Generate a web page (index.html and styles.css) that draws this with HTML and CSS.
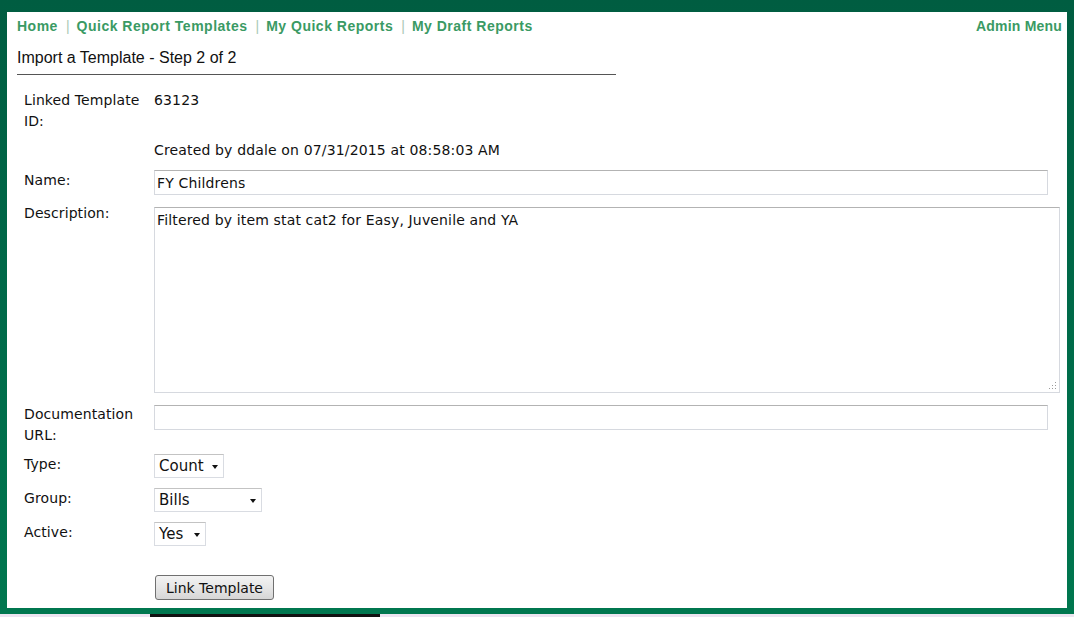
FILE: index.html
```html
<!DOCTYPE html>
<html>
<head>
<meta charset="utf-8">
<link rel="stylesheet" href="styles.css">
</head>
<body>
<div class="frame">
  <div class="page">
    <div class="nav">
      <div class="nav-left">
        <a class="link">Home</a><span class="sep">|</span>
        <a class="link">Quick Report Templates</a><span class="sep">|</span>
        <a class="link">My Quick Reports</a><span class="sep">|</span>
        <a class="link">My Draft Reports</a>
      </div>
      <a class="link admin">Admin Menu</a>
    </div>
    <div class="title">Import a Template - Step 2 of 2</div>
    <div class="rule"></div>
    <div class="form">
      <div class="label">Linked Template ID:</div>
      <div class="value">63123</div>

      <div class="label"></div>
      <div class="value created">Created by ddale on 07/31/2015 at 08:58:03 AM</div>

      <div class="label">Name:</div>
      <div class="value"><input class="text name" type="text" value="FY Childrens"></div>

      <div class="label">Description:</div>
      <div class="value desc-wrap"><textarea class="desc">Filtered by item stat cat2 for Easy, Juvenile and YA</textarea><svg class="grip" width="8" height="8" viewBox="0 0 8 8"><rect x="6" y="0" width="1" height="1" fill="#9a9a9a"/><rect x="3" y="3" width="1" height="1" fill="#9a9a9a"/><rect x="6" y="3" width="1" height="1" fill="#9a9a9a"/><rect x="0" y="6" width="1" height="1" fill="#9a9a9a"/><rect x="3" y="6" width="1" height="1" fill="#9a9a9a"/><rect x="6" y="6" width="1" height="1" fill="#9a9a9a"/></svg></div>

      <div class="label doc">Documentation URL:</div>
      <div class="value"><input class="text url" type="text" value=""></div>

      <div class="label">Type:</div>
      <div class="value"><span class="sel w-type">Count<span class="arrow"></span></span></div>

      <div class="label">Group:</div>
      <div class="value"><span class="sel w-group">Bills<span class="arrow"></span></span></div>

      <div class="label">Active:</div>
      <div class="value"><span class="sel w-active">Yes<span class="arrow"></span></span></div>

      <div class="label"></div>
      <div class="value btnrow"><button class="btn">Link Template</button></div>
    </div>
  </div>
</div>
<div class="strip"><div class="shadow"></div></div>
</body>
</html>
```
FILE: styles.css
```css
html, body {
  margin: 0;
  padding: 0;
}
body {
  background: #ece4f0;
  width: 1074px;
  height: 617px;
  overflow: hidden;
}
.frame {
  height: 614px;
  box-sizing: border-box;
  padding: 12px 7px 6px 7px;
  background: linear-gradient(to bottom, #005d41 0%, #006a49 50%, #00774f 100%);
}
.page {
  background: #ffffff;
  height: 596px;
  box-sizing: border-box;
  padding: 0 5px 0 10px;
  overflow: hidden;
}
.nav {
  display: flex;
  justify-content: space-between;
  align-items: center;
  height: 28px;
  font-family: "Liberation Sans", Arial, sans-serif;
  font-weight: bold;
  font-size: 14px;
  letter-spacing: 0.5px;
}
.nav-left {
  display: flex;
  align-items: center;
}
.link {
  color: #3a9a64;
  text-decoration: none;
}
.admin {
  letter-spacing: 0.2px;
}
.sep {
  color: #a9c9b6;
  font-weight: normal;
  letter-spacing: 0;
  margin: 0 7px 0 8px;
}
.title {
  font-family: "Liberation Sans", Arial, sans-serif;
  font-size: 16px;
  color: #111;
  margin-top: 8px;
  line-height: 20px;
}
.rule {
  width: 599px;
  height: 0;
  border-top: 1px solid #555;
  margin-top: 6px;
}
.form {
  display: grid;
  grid-template-columns: 130px 906px;
  row-gap: 8px;
  margin-top: 15px;
  margin-left: 7px;
  font-family: "DejaVu Sans", Verdana, sans-serif;
  font-size: 14px;
  letter-spacing: 0.15px;
  color: #111;
  line-height: 21px;
}
.label {
  padding-right: 6px;
  letter-spacing: 0.1px;
}
.doc {
  margin-top: 2px;
}
.value {
  min-height: 21px;
}
.created {
  margin-bottom: 1px;
}
.text {
  box-sizing: border-box;
  height: 25px;
  border: 1px solid #d6d9df;
  border-top-color: #b3b3b3;
  padding: 0 2px;
  font-family: "DejaVu Sans", Verdana, sans-serif;
  font-size: 14px;
  letter-spacing: 0.15px;
  color: #111;
  outline: none;
  display: block;
}
.name {
  width: 894px;
}
.url {
  width: 894px;
  margin-top: 3px;
}
.desc-wrap {
  position: relative;
}
.desc {
  display: block;
  box-sizing: border-box;
  width: 906px;
  height: 186px;
  margin-top: 4px;
  margin-bottom: 1px;
  border: 1px solid #d6d9df;
  border-top-color: #b3b3b3;
  padding: 4px 2px;
  font-family: "DejaVu Sans", Verdana, sans-serif;
  font-size: 14px;
  letter-spacing: 0.15px;
  line-height: 17px;
  color: #111;
  resize: none;
  outline: none;
}
.grip {
  position: absolute;
  right: 3px;
  bottom: 4px;
}
.sel {
  position: relative;
  display: inline-flex;
  align-items: center;
  box-sizing: border-box;
  height: 24px;
  border: 1px solid #d9dce2;
  border-top-color: #c3c3c3;
  padding-left: 4px;
  font-size: 15px;
  letter-spacing: 0;
  color: #111;
  background: #fff;
  margin-bottom: 2px;
}
.w-type { width: 70px; }
.w-group { width: 108px; }
.w-active { width: 52px; }
.arrow {
  position: absolute;
  right: 5px;
  top: 10px;
  width: 0;
  height: 0;
  border-left: 3.5px solid transparent;
  border-right: 3.5px solid transparent;
  border-top: 4px solid #111;
}
.btnrow {
  padding-top: 19px;
}
.btn {
  display: block;
  box-sizing: border-box;
  width: 119px;
  height: 25px;
  margin-left: 1px;
  border: 1px solid #707070;
  border-radius: 3px;
  background: linear-gradient(to bottom, #f3f3f3 0%, #e6e6e6 50%, #d6d6d6 100%);
  font-family: "DejaVu Sans", Verdana, sans-serif;
  font-size: 14px;
  letter-spacing: 0;
  color: #111;
  padding: 0;
}
.strip {
  height: 3px;
  position: relative;
}
.shadow {
  position: absolute;
  left: 150px;
  top: 0;
  width: 230px;
  height: 3px;
  background: #111;
}
```
